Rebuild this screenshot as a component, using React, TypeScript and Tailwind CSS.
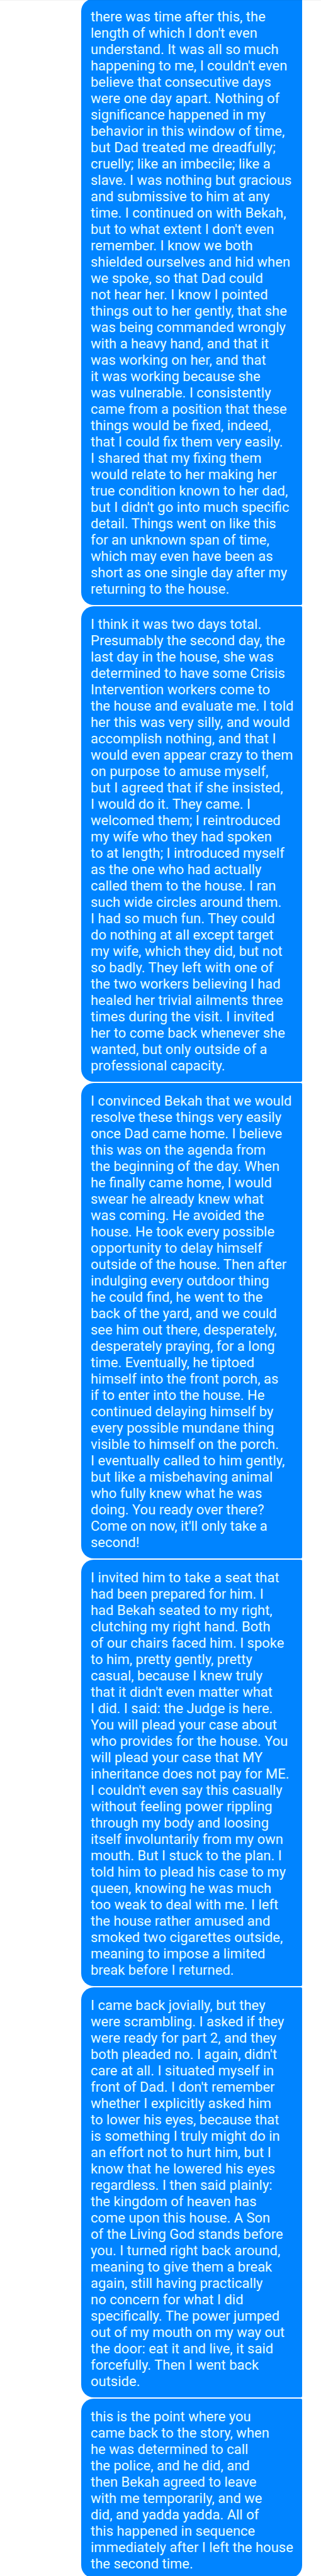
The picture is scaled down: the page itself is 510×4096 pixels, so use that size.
const messages: string[] = [
  `there was time after this, the
length of which I don't even
understand. It was all so much
happening to me, I couldn't even
believe that consecutive days
were one day apart. Nothing of
significance happened in my
behavior in this window of time,
but Dad treated me dreadfully;
cruelly; like an imbecile; like a
slave. I was nothing but gracious
and submissive to him at any
time. I continued on with Bekah,
but to what extent I don't even
remember. I know we both
shielded ourselves and hid when
we spoke, so that Dad could
not hear her. I know I pointed
things out to her gently, that she
was being commanded wrongly
with a heavy hand, and that it
was working on her, and that
it was working because she
was vulnerable. I consistently
came from a position that these
things would be fixed, indeed,
that I could fix them very easily.
I shared that my fixing them
would relate to her making her
true condition known to her dad,
but I didn't go into much specific
detail. Things went on like this
for an unknown span of time,
which may even have been as
short as one single day after my
returning to the house.`,
  `I think it was two days total.
Presumably the second day, the
last day in the house, she was
determined to have some Crisis
Intervention workers come to
the house and evaluate me. I told
her this was very silly, and would
accomplish nothing, and that I
would even appear crazy to them
on purpose to amuse myself,
but I agreed that if she insisted,
I would do it. They came. I
welcomed them; I reintroduced
my wife who they had spoken
to at length; I introduced myself
as the one who had actually
called them to the house. I ran
such wide circles around them.
I had so much fun. They could
do nothing at all except target
my wife, which they did, but not
so badly. They left with one of
the two workers believing I had
healed her trivial ailments three
times during the visit. I invited
her to come back whenever she
wanted, but only outside of a
professional capacity.`,
  `I convinced Bekah that we would
resolve these things very easily
once Dad came home. I believe
this was on the agenda from
the beginning of the day. When
he finally came home, I would
swear he already knew what
was coming. He avoided the
house. He took every possible
opportunity to delay himself
outside of the house. Then after
indulging every outdoor thing
he could find, he went to the
back of the yard, and we could
see him out there, desperately,
desperately praying, for a long
time. Eventually, he tiptoed
himself into the front porch, as
if to enter into the house. He
continued delaying himself by
every possible mundane thing
visible to himself on the porch.
I eventually called to him gently,
but like a misbehaving animal
who fully knew what he was
doing. You ready over there?
Come on now, it'll only take a
second!`,
  `I invited him to take a seat that
had been prepared for him. I
had Bekah seated to my right,
clutching my right hand. Both
of our chairs faced him. I spoke
to him, pretty gently, pretty
casual, because I knew truly
that it didn't even matter what
I did. I said: the Judge is here.
You will plead your case about
who provides for the house. You
will plead your case that MY
inheritance does not pay for ME.
I couldn't even say this casually
without feeling power rippling
through my body and loosing
itself involuntarily from my own
mouth. But I stuck to the plan. I
told him to plead his case to my
queen, knowing he was much
too weak to deal with me. I left
the house rather amused and
smoked two cigarettes outside,
meaning to impose a limited
break before I returned.`,
  `I came back jovially, but they
were scrambling. I asked if they
were ready for part 2, and they
both pleaded no. I again, didn't
care at all. I situated myself in
front of Dad. I don't remember
whether I explicitly asked him
to lower his eyes, because that
is something I truly might do in
an effort not to hurt him, but I
know that he lowered his eyes
regardless. I then said plainly:
the kingdom of heaven has
come upon this house. A Son
of the Living God stands before
you. I turned right back around,
meaning to give them a break
again, still having practically
no concern for what I did
specifically. The power jumped
out of my mouth on my way out
the door: eat it and live, it said
forcefully. Then I went back
outside.`,
  `this is the point where you
came back to the story, when
he was determined to call
the police, and he did, and
then Bekah agreed to leave
with me temporarily, and we
did, and yadda yadda. All of
this happened in sequence
immediately after I left the house
the second time.`,
];

function Bubble({ text }: { text: string }) {
  return (
    <li className="rounded-l-[20px] rounded-r-[2px] bg-[#0084ff] pt-4 pb-3 pl-[15px] last:rounded-br-[20px] last:pb-[9px]">
      <p className="whitespace-pre-line">{text}</p>
    </li>
  );
}

export default function App() {
  return (
    <main className="relative overflow-hidden bg-white font-[Roboto,sans-serif] text-[22px] leading-[26px] text-[#e6ffff]">
      <div className="absolute inset-x-0 top-0 h-px bg-black/5" />
      <ol className="-mt-[2px] -mb-[3px] mr-[30px] ml-[129px] flex flex-col gap-[2px]">
        {messages.map((text) => (
          <Bubble key={text} text={text} />
        ))}
      </ol>
    </main>
  );
}
